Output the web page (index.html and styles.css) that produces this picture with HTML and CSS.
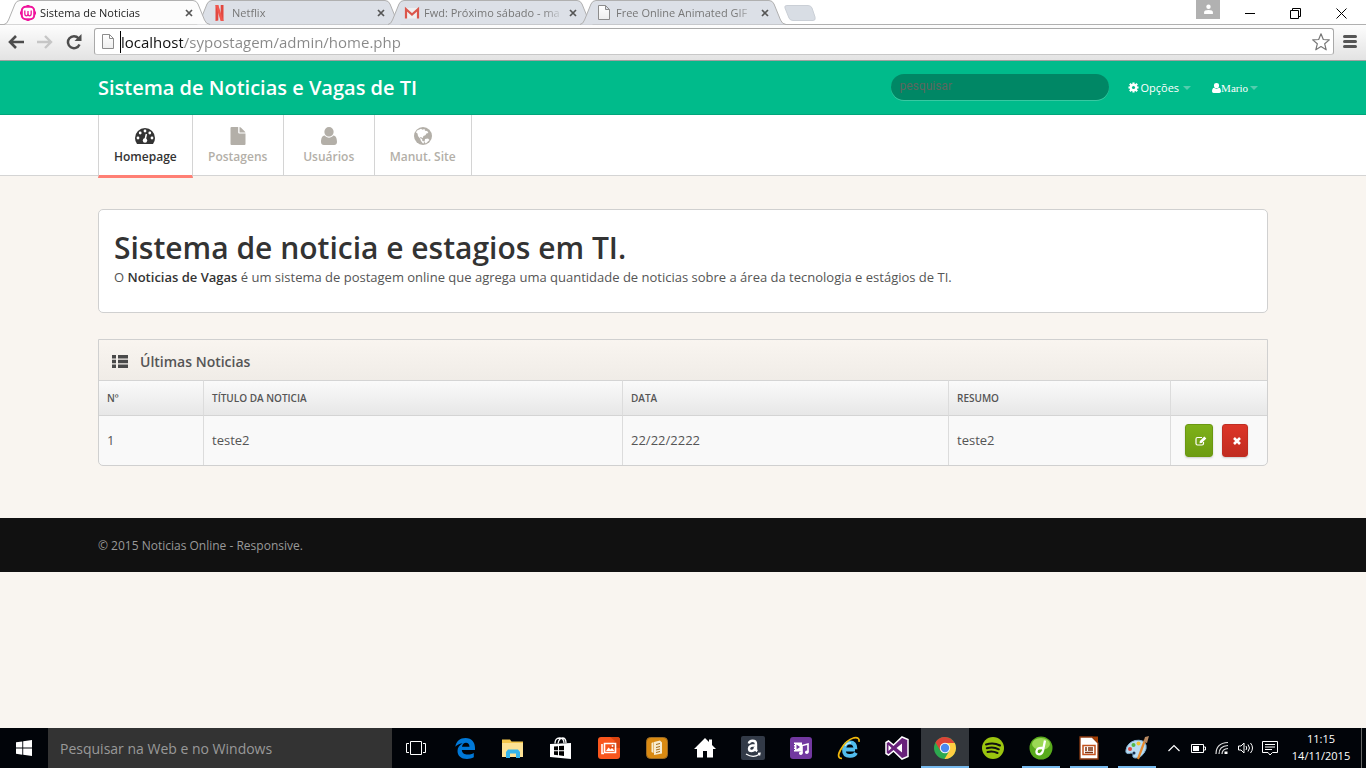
FILE: index.html
```html
<!DOCTYPE html>
<html lang="pt-BR">
<head>
<meta charset="utf-8">
<title>Sistema de Noticias</title>
<link rel="stylesheet" href="styles.css">
</head>
<body>
<svg class="defs" aria-hidden="true">
  <defs>
    <linearGradient id="g-page" x2="0" y2="1"><stop offset="0" stop-color="#fff"/><stop offset="1" stop-color="#eee"/></linearGradient>
    <symbol id="tab-shape" viewBox="0 0 206 25"><path d="M0 24.500Q3 24 4.500 20L11 4Q12.500.500 16 .500H189Q192.500.500 194 4L200.500 20Q202 24 206 24.500" stroke="#b0b0b0"/></symbol>
    <symbol id="close" viewBox="0 0 8 8"><path d="M1 1l6 6M7 1L1 7" stroke="currentColor" stroke-width="1.700"/></symbol>
    <symbol id="page" viewBox="0 0 12 16"><path d="M.5 .5H7.500L11.500 4.500V14.500H.5zM7.500.5V4.500H11.500" fill="url(#g-page)" stroke="#8c8c8c"/></symbol>
    <symbol id="user" viewBox="0 0 16 18"><path d="M8 0a4.600 4.600 0 0 1 4.600 4.800C12.600 7.500 10.600 9.600 8 9.600S3.400 7.500 3.400 4.800A4.600 4.600 0 0 1 8 0zM3.700 8.600C5 10 6.300 10.700 8 10.700s3-.7 4.300-2.100C15 8.600 16 12 16 15c0 2-1.200 3-2.800 3H2.800C1.200 18 0 17 0 15c0-3 1-6.400 3.700-6.400z" fill="currentColor"/></symbol>
  </defs>
</svg>

<header class="browser">
  <div class="tabstrip">
    <div class="tab tab-active">
      <svg class="tab-bg"><use href="#tab-shape"/></svg>
      <svg class="favicon" viewBox="0 0 16 16"><rect x="1.800" y="1.800" width="12.400" height="12.400" rx="4" fill="#fff" stroke="#f0149c" stroke-width="2"/><path d="M4.800 5.500v3q0 2.300 1.600 2.300T8 8.500V6M8 8.500q0 2.300 1.600 2.300t1.600-2.300v-3" fill="none" stroke="#f0149c" stroke-width="1.300"/><path d="M0 8h2M14 8h2M8 0v2M8 14v2" stroke="#f0149c" stroke-width="3"/></svg>
      <span class="tab-title">Sistema de Noticias</span>
      <button class="tab-close" aria-label="Fechar"><svg><use href="#close"/></svg></button>
    </div>
    <div class="tab">
      <svg class="tab-bg"><use href="#tab-shape"/></svg>
      <svg class="favicon" viewBox="0 0 16 16"><path d="M3.500 0h2.800v15.500l-2.800.5zM8.700 0h2.800v16l-2.800-.5z" fill="#e2473f"/><path d="M3.500 0h2.800l5.200 16H8.700z" fill="#f1564d"/></svg>
      <span class="tab-title">Netflix</span>
      <button class="tab-close" aria-label="Fechar"><svg><use href="#close"/></svg></button>
    </div>
    <div class="tab">
      <svg class="tab-bg"><use href="#tab-shape"/></svg>
      <svg class="favicon" viewBox="0 0 16 16"><path d="M1.500 3h13v10.500h-13z" fill="#efefef"/><path d="M2 13.500V4.200l6 5.300 6-5.300v9.300" fill="none" stroke="#db564b" stroke-width="2.200"/></svg>
      <span class="tab-title">Fwd: Próximo sábado - ma</span>
      <button class="tab-close" aria-label="Fechar"><svg><use href="#close"/></svg></button>
    </div>
    <div class="tab">
      <svg class="tab-bg"><use href="#tab-shape"/></svg>
      <svg class="favicon"><use href="#page"/></svg>
      <span class="tab-title">Free Online Animated GIF</span>
      <button class="tab-close" aria-label="Fechar"><svg><use href="#close"/></svg></button>
    </div>
    <button class="new-tab" aria-label="Nova guia"><svg viewBox="0 0 32 16"><path d="M3 .5H24Q27 .5 28 3L31 12Q32 15.500 29 15.500H9Q6 15.500 5 13L1 3Q0 .5 3 .5z" fill="#d8dde4" stroke="#cacfd6"/></svg></button>
    <div class="window-controls">
      <button class="profile" aria-label="Perfil"><svg viewBox="0 0 10 10"><circle cx="5" cy="2.500" r="2" fill="#fff"/><path d="M1 9V7.500Q1 5.500 5 5.500T9 7.500V9z" fill="#fff"/></svg></button>
      <button aria-label="Minimizar"><svg viewBox="0 0 11 11"><path d="M1 5.500h10" stroke="#000"/></svg></button>
      <button aria-label="Restaurar"><svg viewBox="0 0 11 11"><path d="M.5 2.500h8v8h-8zM2.500 2.500v-2h8v8h-2" fill="none" stroke="#000"/></svg></button>
      <button aria-label="Fechar janela"><svg viewBox="0 0 11 11"><path d="M.5.5l10 10M10.500.5l-10 10" stroke="#000"/></svg></button>
    </div>
  </div>
  <div class="toolbar">
    <button class="tool" aria-label="Voltar"><svg viewBox="0 0 18 16"><path d="M17 8H4M9 2L3 8l6 6" fill="none" stroke="#4d4d4d" stroke-width="2.600"/></svg></button>
    <button class="tool" aria-label="Avançar"><svg viewBox="0 0 18 16"><path d="M1 8h13M9 2l6 6-6 6" fill="none" stroke="#c6c6c6" stroke-width="2.400"/></svg></button>
    <button class="tool" aria-label="Recarregar"><svg viewBox="0 0 18 16"><path d="M13.500 4.200A6 6 0 1 0 14.500 10.500" fill="none" stroke="#4d4d4d" stroke-width="2.500"/><path d="M16.500 0v7H9.500z" fill="#4d4d4d"/></svg></button>
    <div class="omnibox">
      <svg class="page-icon"><use href="#page"/></svg>
      <span class="caret"></span>
      <input class="address" type="text" aria-label="Endereço" value="localhost/sypostagem/admin/home.php">
      <button class="star" aria-label="Favoritar"><svg viewBox="0 0 18 18"><path d="M9 .8l2.300 5.700 6 .4-4.600 3.900 1.500 6-5.200-3.200-5.200 3.200 1.500-6L.7 6.900l6-.4z" fill="#fff" stroke="#777" stroke-width="1.200" stroke-linejoin="round"/></svg></button>
    </div>
    <button class="menu" aria-label="Menu"><svg viewBox="0 0 14 13"><path d="M1.500 1.500h11M1.500 6.500h11M1.500 11.500h11" stroke="#555" stroke-width="3" stroke-linecap="round"/></svg></button>
  </div>
</header>

<main class="site">
  <div class="topbar">
    <div class="container topbar-inner">
      <a class="brand" href="#">Sistema de Noticias e Vagas de TI</a>
      <input class="search" type="text" placeholder="pesquisar" aria-label="pesquisar">
      <a class="toplink" href="#"><svg class="gear" viewBox="0 0 12 12"><path d="M6 .5v11M.5 6h11M2 2l8 8M10 2l-8 8" stroke="#fff" stroke-width="2.400"/><circle cx="6" cy="6" r="4.200" fill="#fff"/><circle cx="6" cy="6" r="1.700" fill="#00bb8b"/></svg><span>Opções</span><i class="arrow"></i></a>
      <a class="toplink toplink-user" href="#"><svg class="person"><use href="#user"/></svg><span>Mario</span><i class="arrow"></i></a>
    </div>
  </div>
  <nav class="mainnav">
    <div class="container nav-list">
      <a class="nav-item nav-current" href="#"><svg viewBox="0 0 20 18"><path d="M2 17Q0 14.500 0 11a10 10 0 0 1 20 0Q20 14.500 18 17z" fill="currentColor"/><g fill="#fff"><circle cx="3" cy="11" r="1.400"/><circle cx="5.200" cy="6" r="1.400"/><circle cx="10" cy="4" r="1.400"/><circle cx="14.800" cy="6" r="1.400"/><circle cx="17" cy="11" r="1.400"/><circle cx="10" cy="13.500" r="2.200"/></g><path d="M10 13L11.400 7" stroke="#fff" stroke-width="1.500"/></svg><span>Homepage</span></a>
      <a class="nav-item" href="#"><svg viewBox="0 0 20 18"><path d="M2.500 1Q2.500 0 3.500 0h6.700v5.500q0 1 1 1h6.300V17q0 1-1 1h-13q-1 0-1-1zM11.500 0q.8.100 1.300.6l4 4q.5.500.6 1h-5.900z" fill="currentColor"/></svg><span>Postagens</span></a>
      <a class="nav-item" href="#"><svg><use href="#user"/></svg><span>Usuários</span></a>
      <a class="nav-item" href="#"><svg viewBox="0 0 20 18"><circle cx="10" cy="9" r="9" fill="currentColor"/><path d="M4 3.500L8 1.800l1.500 1 2-.8.500 1.800 2.200.2 1.200 2-2 .5-1 1.800-2 .8-.5 1.800-2.300-.8-.7 1 2.200.8.300 2 2 .5-1.200 2.400-2.200-2.800-.8-2.300-2.200-2.700-.5-2.500L3 5.500zM12 12l3-.5 1.500 1.500-3.700 3.500-1.300-1.500z" fill="#fff"/></svg><span>Manut. Site</span></a>
    </div>
  </nav>

  <div class="container content">
    <section class="hero">
      <h1>Sistema de noticia e estagios em TI.</h1>
      <p>O <strong>Noticias de Vagas</strong> é um sistema de postagem online que agrega uma quantidade de noticias sobre a área da tecnologia e estágios de TI.</p>
    </section>
    <section class="panel">
      <h2><svg viewBox="0 0 16 13"><path d="M0 0h4v3.500H0zM6 0h10v3.500H6zM0 4.800h4v3.400H0zM6 4.800h10v3.400H6zM0 9.500h4V13H0zM6 9.500h10V13H6z" fill="#4a4a4a"/></svg>Últimas Noticias</h2>
      <table>
        <colgroup><col class="c-num"><col><col class="c-date"><col class="c-sum"><col class="c-act"></colgroup>
        <thead><tr><th>Nº</th><th>TÍTULO DA NOTICIA</th><th>DATA</th><th>RESUMO</th><th></th></tr></thead>
        <tbody><tr><td>1</td><td>teste2</td><td>22/22/2222</td><td>teste2</td>
          <td class="actions"><div>
            <button class="edit" aria-label="Editar"><svg viewBox="0 0 12 10"><path d="M7 1.500H2.500Q1 1.500 1 3v4.500Q1 9 2.500 9H7Q8.500 9 8.500 7.500V6" fill="none" stroke="#fff" stroke-width="1.200"/><path d="M4.500 7.200l.3-2.300L9.300.4l2 2-4.500 4.500z" fill="#fff"/></svg></button>
            <button class="remove" aria-label="Excluir"><svg viewBox="0 0 8 8"><path d="M1 1l6 6M7 1L1 7" stroke="#fff" stroke-width="2.600"/></svg></button>
          </div></td></tr></tbody>
      </table>
    </section>
  </div>
  <footer class="footer"><div class="container">© 2015 Noticias Online - Responsive.</div></footer>
</main>

<footer class="taskbar">
  <button class="task" aria-label="Iniciar"><svg viewBox="0 0 24 24"><path d="M4 6.300l6.300-.9v6.100H4zM11.200 5.300L20 4v7.500h-8.800zM4 12.500h6.300v6.200L4 17.800zM11.200 12.500H20V20l-8.800-1.200z" fill="#fff"/></svg></button>
  <input class="winsearch" type="text" placeholder="Pesquisar na Web e no Windows" aria-label="Pesquisar na Web e no Windows">
  <button class="task task-view" aria-label="Visão de tarefas"><svg viewBox="0 0 24 24"><path d="M6.500 5.500h11v13h-11zM5 7.500H2.500v9H5M19 7.500h2.500v9H19" fill="none" stroke="#fff"/></svg></button>
  <button class="task" aria-label="Edge"><svg viewBox="0 0 24 24"><path d="M2.300 10.800C3.300 5 7 2 12.500 2 19 2 22 6.500 22 12v2H8.800c.2 3 2.700 4.600 6 4.600 2.200 0 4.200-.6 6-1.700v4.400C18.700 22.500 16.500 23 14 23 8.200 23 4.500 19.800 4.500 15c0-3.600 2-6.200 5.200-7.800-4 .5-6.200 2-7.400 3.600zM9 10.700h7.500C16.400 8 15 6.800 13 6.800S9.400 8.200 9 10.700z" fill="#0078d7"/></svg></button>
  <button class="task" aria-label="Explorador"><svg viewBox="0 0 24 24"><path d="M1 3.500h8l1.500 2H22V21H1z" fill="#f4c64c"/><path d="M1 7h21v14H1z" fill="#fde294"/><path d="M5 22v-6l2-2.500h10l2 2.500v6h-4v-4.500H9V22z" fill="#35b4ea"/></svg></button>
  <button class="task" aria-label="Loja"><svg viewBox="0 0 24 24"><path d="M1 8l21-1v16L1 21z" fill="#fff"/><path d="M6 7.500Q6 2 10.500 2T15 7M9 7.500Q10 2 13.500 2T17 7" fill="none" stroke="#fff" stroke-width="1.300"/><path d="M5 10.500l4-.3v4H5zM10 10.100l5-.4v4.500h-5zM5 15.200h4v4l-4-.5zM10 15.200h5v4.700l-5-.6z" fill="#000"/></svg></button>
  <button class="task" aria-label="Imagens"><svg viewBox="0 0 24 24"><rect x="1" y="1" width="22" height="22" rx="3" fill="#f9561d"/><path d="M13 1l5 4-5 7h10V4q0-3-3-3z" fill="#d94410"/><path d="M7.500 7.500h11v9h-11zM5 8v9.500h2" fill="none" stroke="#fff" stroke-width="1.600"/><path d="M9 15l2.500-3.500 2 2 1.500-1.500 2.500 3z" fill="#fff"/><circle cx="15.500" cy="10" r="1" fill="#fff"/></svg></button>
  <button class="task" aria-label="Documentos"><svg viewBox="0 0 24 24"><rect x="1.500" y="1.500" width="21" height="21" rx="4" fill="#d98a12" stroke="#9b6a24"/><path d="M6.500 7l2-1v11l-2-1zM9 6l6-1.500 2 2v11L9 19z" fill="#f7ecd0"/><path d="M11 8.500l4-1M11 11.500l4-1M11 14l4-1M11 16.500l4-1" stroke="#a56c19"/></svg></button>
  <button class="task" aria-label="Início"><svg viewBox="0 0 24 24"><path d="M1 13L12 2l4 4V3.500h3V9l4 4h-3v8.500h-6V15h-4v6.500H4V13z" fill="#fff"/></svg></button>
  <button class="task" aria-label="Amazon"><svg viewBox="0 0 24 24"><rect width="24" height="24" rx="2" fill="#323a47"/><path d="M7.800 7.500Q8.500 4.800 11.500 4.800q3.500 0 3.500 3.200v5q0 1.500 1.200 2.300M14 9.300Q8 9.300 8 12.700q0 2.300 2.600 2.300 3.400 0 3.400-4" fill="none" stroke="#fff" stroke-width="2.400"/><path d="M5 18q7 4.500 13 .5m-1-1l2-.2-.5 2.200" fill="none" stroke="#fff" stroke-width="1.300"/></svg></button>
  <button class="task" aria-label="Filmes"><svg viewBox="0 0 24 24"><rect x="1" y="1" width="22" height="22" rx="3" fill="#7238a0"/><path d="M5 6.500h8v9H5z" fill="#fff"/><path d="M7.500 8.500v5L11 11z" fill="#7238a0"/><path d="M5.500 8v6.500" stroke="#7238a0" stroke-width="1" stroke-dasharray="1 1.500"/><path d="M13 17V9.500l6-1.500v8" fill="none" stroke="#fff" stroke-width="1.600"/><circle cx="11.800" cy="17.300" r="1.800" fill="#fff"/><circle cx="17.800" cy="16.200" r="1.800" fill="#fff"/></svg></button>
  <button class="task" aria-label="Internet Explorer"><svg viewBox="0 0 24 24"><path d="M18 13.500H8.500M18.500 13.300Q18.500 6.500 13 6.500T7 13.500t6.500 6.300q4 0 5.500-3" fill="none" stroke="#51bdee" stroke-width="3.800"/><path d="M8 10q2-3.500 6-3" fill="none" stroke="#b9edff" stroke-width="1.300"/><path d="M5 22.500Q-1 22 3.500 14 9 4 17 1.800q6-1 5 4" fill="none" stroke="#f2b90c" stroke-width="1.700"/></svg></button>
  <button class="task" aria-label="Visual Studio"><svg viewBox="0 0 24 24"><path d="M17 1l6 2.500v17L17 23 8.500 15 3.500 19 1 17.500v-11L3.500 5l5 4z" fill="#68217a" stroke="#fff" stroke-width="1.500"/><path d="M17 7.500v9L11.500 12zM3.500 9v6l3-3z" fill="#fff"/></svg></button>
  <button class="task task-active" aria-label="Chrome"><svg viewBox="0 0 24 24"><circle cx="12" cy="12" r="11" fill="#2da94f"/><path d="M12 7h9.800A11 11 0 0 1 11.500 23l5-8.500z" fill="#ffcd42"/><path d="M2.500 6.500L7.500 15 12 7h9.700Q18 1 12 1 5.500 1 2.500 6.500z" fill="#dc4437"/><circle cx="12" cy="12" r="5.200" fill="#f5f5f5"/><circle cx="12" cy="12" r="4.200" fill="#4a88ee"/></svg></button>
  <button class="task" aria-label="Spotify"><svg viewBox="0 0 24 24"><circle cx="12" cy="12" r="11" fill="#9bc50f"/><path d="M5 8.500q7.500-2.500 14 1M5.800 12.300q6.500-2 12 1M6.500 16q5-1.500 10 1" fill="none" stroke="#111" stroke-width="2" stroke-linecap="round"/></svg></button>
  <button class="task task-open" aria-label="Música"><svg viewBox="0 0 24 24"><circle cx="12" cy="12" r="11.500" fill="#58aa1c"/><ellipse cx="12" cy="8" rx="9" ry="6" fill="#9bd955"/><path d="M16 4.500L14 14.500Q13 18.500 10 18.300 7.300 18 7.500 15.300 8.200 11.500 13.500 12" fill="none" stroke="#fff" stroke-width="2.300"/></svg></button>
  <button class="task task-open" aria-label="Impress"><svg viewBox="0 0 24 24"><path d="M3 1h12l6 6v16H3z" fill="#fff" stroke="#8e3a10" stroke-width="1.300"/><path d="M15 .5h6V7z" fill="#a33e03"/><path d="M6 9.500h12v9H6z" fill="#fff" stroke="#c4511c" stroke-width="1.500"/><path d="M8 12h2M11 12h5M8 14h2M11 14h5M8 16.500h8" stroke="#7d3210" stroke-width="1.300"/></svg></button>
  <button class="task task-open" aria-label="Paint"><svg viewBox="0 0 24 24"><path d="M1 14Q2 7 10 4.500 19 3 21 9q1 4-2 8-3 5-8 5-4 0-3-3 .5-2-2-2Q0 19 1 14z" fill="#b9dcf2" stroke="#7fb0d2"/><circle cx="5" cy="13" r="2" fill="#dc4b41"/><circle cx="8.500" cy="9" r="2" fill="#52b848"/><circle cx="13.500" cy="7.500" r="2" fill="#f2c230"/><circle cx="9" cy="17" r="1.500" fill="#173050"/><path d="M13 23L20 4" stroke="#e68a2e" stroke-width="2.200"/><path d="M18.500 6L20 1l4-1-2 7z" fill="#b98a62"/></svg></button>
  <div class="tray">
    <button aria-label="Mostrar ícones ocultos"><svg viewBox="0 0 16 16"><path d="M2.500 11L8 5.500l5.500 5.500" fill="none" stroke="#fff" stroke-width="1.200"/></svg></button>
    <button aria-label="Bateria"><svg viewBox="0 0 16 16"><path d="M1.500 4.500h12v8h-12zM14 7h1.500v3H14" fill="none" stroke="#fff"/><path d="M3 6h6v5H3z" fill="#fff"/></svg></button>
    <button aria-label="Rede"><svg viewBox="0 0 16 16"><path d="M2 14Q2 3 14 2.500M5 14Q5 6 14 5.500M8 14Q8 9 14 8.500" fill="none" stroke="#ddd" stroke-width="1.200"/><path d="M10.500 14v-2.500h3V14z" fill="#fff"/></svg></button>
    <button aria-label="Volume"><svg viewBox="0 0 16 16"><path d="M.5 6H3l3-3v10l-3-3H.5zM8 6q1.500 2 0 4M10 4.500q3 3.500 0 7M12.500 3q4 5 0 10" fill="none" stroke="#fff"/></svg></button>
    <button aria-label="Notificações"><svg viewBox="0 0 16 16"><path d="M.5 1.500h15v11h-5L8 15l-2-2.500H.5zM3 4.500h10M3 7h10M3 9.500h7" fill="none" stroke="#fff"/></svg></button>
    <time class="clock"><span>11:15</span><span>14/11/2015</span></time>
    <button class="show-desktop" aria-label="Mostrar área de trabalho"></button>
  </div>
</footer>
</body>
</html>
```
FILE: styles.css
```css
* { box-sizing: border-box; }
body {
  margin: 0;
  min-height: 100vh;
  display: flex;
  flex-direction: column;
  font-family: "Open Sans", "Noto Sans", sans-serif;
  font-size: 13px;
  color: #555;
  background: #f9f5f0;
}
button { border: 0; padding: 0; margin: 0; background: none; font: inherit; display: flex; align-items: center; justify-content: center; }
input { font: inherit; border: 0; padding: 0; outline: 0; min-width: 0; }
a { text-decoration: none; color: inherit; }
svg { display: block; flex: none; }
.defs { position: absolute; width: 0; height: 0; }

/* Browser window */
.browser { background: #fff; }
.tabstrip { display: flex; height: 25px; padding-left: 4px; border-bottom: 1px solid #b0b0b0; }
.tab {
  position: relative;
  z-index: 1;
  flex: none;
  display: flex;
  align-items: center;
  gap: 4px;
  width: 206px;
  height: 25px;
  padding: 1px 16px;
  margin-right: -14px;
  color: #777;
}
.tab-active { z-index: 2; color: #222; }
.tab-bg { position: absolute; inset: 0; width: 206px; height: 25px; fill: #dce0e7; z-index: -1; }
.tab-active .tab-bg { fill: #fcfcfc; }
.favicon { width: 16px; height: 16px; }
.tab-title {
  flex: 1;
  overflow: hidden;
  white-space: nowrap;
  font-size: 11px;
  -webkit-mask-image: linear-gradient(to right, #000 85%, transparent);
  mask-image: linear-gradient(to right, #000 85%, transparent);
}
.tab-close { color: #555; width: 10px; height: 16px; }
.tab-close svg { width: 8px; height: 8px; }
.new-tab { margin: 0 0 0 12px; width: 32px; height: 25px; z-index: 1; }
.new-tab svg { width: 32px; height: 16px; }
.window-controls { margin-left: auto; padding-right: 2px; display: flex; align-items: flex-start; }
.window-controls button { width: 46px; height: 26px; }
.window-controls svg { width: 11px; height: 11px; }
.window-controls .profile { width: 24px; height: 19px; background: #b1b1b1; margin-right: 6px; }
.toolbar {
  display: flex;
  align-items: center;
  height: 36px;
  padding: 0 9px 2px 7px;
  background: linear-gradient(#fdfdfd, #e3e3e3);
  border-bottom: 1px solid #a0a0a0;
}
.tool { width: 18px; height: 24px; margin-right: 11px; }
.tool svg { width: 18px; height: 16px; }
.omnibox {
  flex: 1;
  display: flex;
  align-items: center;
  height: 27px;
  padding: 0 3px 0 7px;
  background: #fff;
  border: 1px solid #a9a9a9;
  border-bottom-color: #c8c8c8;
  border-radius: 3px;
}
.page-icon { width: 12px; height: 16px; }
.caret { width: 1px; height: 22px; margin-left: 6px; background: #000; }
.address {
  flex: 1;
  height: 24px;
  font-size: 15px;
  color: transparent;
  background: linear-gradient(to right, #111 62px, #888 62px);
  -webkit-background-clip: text;
  background-clip: text;
}
.star svg { width: 18px; height: 18px; }
.menu { width: 14px; margin-left: 9px; }
.menu svg { width: 14px; height: 13px; }

/* Site */
.site { flex: 1; }
.container { width: 100%; max-width: 1170px; margin: 0 auto; }
.topbar { background: #00bb8b; border-bottom: 1px solid #00a57a; color: #fff; }
.topbar-inner { display: flex; align-items: center; height: 53px; padding-right: 10px; }
.brand { margin-right: auto; font-size: 20px; font-weight: 600; }
.search {
  width: 218px;
  height: 26px;
  padding: 0 9px 1px;
  margin: 0 19px 2px 0;
  border-radius: 13px;
  background: #008765;
  box-shadow: 0 1px 0 #38c9a2;
  font: 12px Roboto, sans-serif;
  color: #fff;
}
.search::placeholder { color: #5c665f; opacity: 1; }
.toplink { display: flex; align-items: center; font-size: 11px; font-weight: 500; }
.toplink-user { margin-left: 21px; font-family: "Liberation Serif", serif; }
.gear { width: 11px; height: 11px; margin-right: 2px; }
.person { width: 9px; height: 10px; }
.arrow { margin-left: 4px; border: 4px solid transparent; border-top-color: #53cdae; border-bottom: 0; }
.toplink-user .arrow { margin-left: 2px; }
.mainnav { background: #fff; border-bottom: 1px solid #d4d4d4; }
.nav-list { display: flex; }
.nav-item {
  display: flex;
  flex-direction: column;
  align-items: center;
  gap: 4px;
  height: 60px;
  min-width: 91px;
  padding: 12px 15px 0;
  border-right: 1px solid #d4d4d4;
  font-size: 12px;
  line-height: 16px;
  font-weight: 600;
  color: #b3afa8;
}
.nav-item svg { width: 20px; height: 18px; }
.nav-current {
  height: 63px;
  margin-bottom: -3px;
  border-left: 1px solid #d4d4d4;
  border-bottom: 3px solid #ff7f74;
  color: #333;
}
.content { padding: 33px 0 52px; }
.hero { padding: 19px 15px 25px; background: #fff; border: 1px solid #d0d0d0; border-radius: 5px; }
.hero h1 { margin: 0; font-size: 30px; line-height: 38px; font-weight: 600; color: #333; }
.hero p { margin: 0; font-size: 13px; line-height: 20px; }
.hero strong { font-weight: 600; color: #333; }
.panel { margin-top: 26px; border: 1px solid #d0d0d0; border-radius: 0 0 5px 5px; background: #f9f9f9; overflow: hidden; }
.panel h2 {
  display: flex;
  align-items: center;
  gap: 12px;
  height: 40px;
  margin: 0;
  padding: 2px 13px 0;
  font-size: 14px;
  font-weight: 600;
  color: #555;
  background: linear-gradient(#f9f5f0, #f0ece7);
}
.panel h2 svg { width: 16px; height: 13px; }
table { width: 100%; border-collapse: separate; border-spacing: 0; table-layout: fixed; }
.c-num { width: 104px; }
.c-date { width: 326px; }
.c-sum { width: 222px; }
.c-act { width: 97px; }
th, td { padding: 0 8px; text-align: left; border-top: 1px solid #d4d4d4; }
th + th, td + td { border-left: 1px solid #dcdcdc; }
th { height: 35px; font-size: 10px; font-weight: 600; background: linear-gradient(#fafafa, #e7e7e7); }
td { height: 50px; padding-bottom: 2px; }
.actions { padding: 0 14px; }
.actions div { display: flex; gap: 9px; }
.actions button { width: 28px; height: 33px; padding-left: 4px; border-radius: 3px; box-shadow: 0 1px 2px #ccc; }
.actions .edit { background: linear-gradient(#7eb119, #6d9c12); border: 1px solid #6b9811; }
.actions .remove { width: 26px; background: linear-gradient(#dc3528, #c12c20); border: 1px solid #bf2d22; }
.edit svg { width: 12px; height: 10px; }
.remove svg { width: 8px; height: 8px; }
.footer { padding-top: 2px; background: #111; color: #999; font-size: 12px; line-height: 52px; }

/* Taskbar */
.taskbar { display: flex; height: 40px; background: #010409; color: #fff; }
.task { width: 48px; height: 40px; flex: none; }
.task svg { width: 24px; height: 24px; }
.task-view { margin-right: 1px; }
.task-active { background: #33373c; border-bottom: 2px solid #76b9ed; padding-top: 2px; }
.task-open { background: linear-gradient(#76b9ed, #76b9ed) center bottom / 38px 2px no-repeat; }
.winsearch { flex: 1; height: 40px; padding: 0 12px; background: #333; font-size: 14px; color: #fff; }
.winsearch::placeholder { color: #999; opacity: 1; }
.tray { display: flex; align-items: center; padding-left: 1px; }
.tray button { width: 24px; height: 40px; }
.tray svg { width: 16px; height: 16px; }
.clock { display: flex; flex-direction: column; width: 78px; padding-bottom: 3px; text-align: center; font-size: 11px; line-height: 17px; }
.tray .show-desktop { width: 5px; margin-left: 1px; border-left: 1px solid #666; }
```
